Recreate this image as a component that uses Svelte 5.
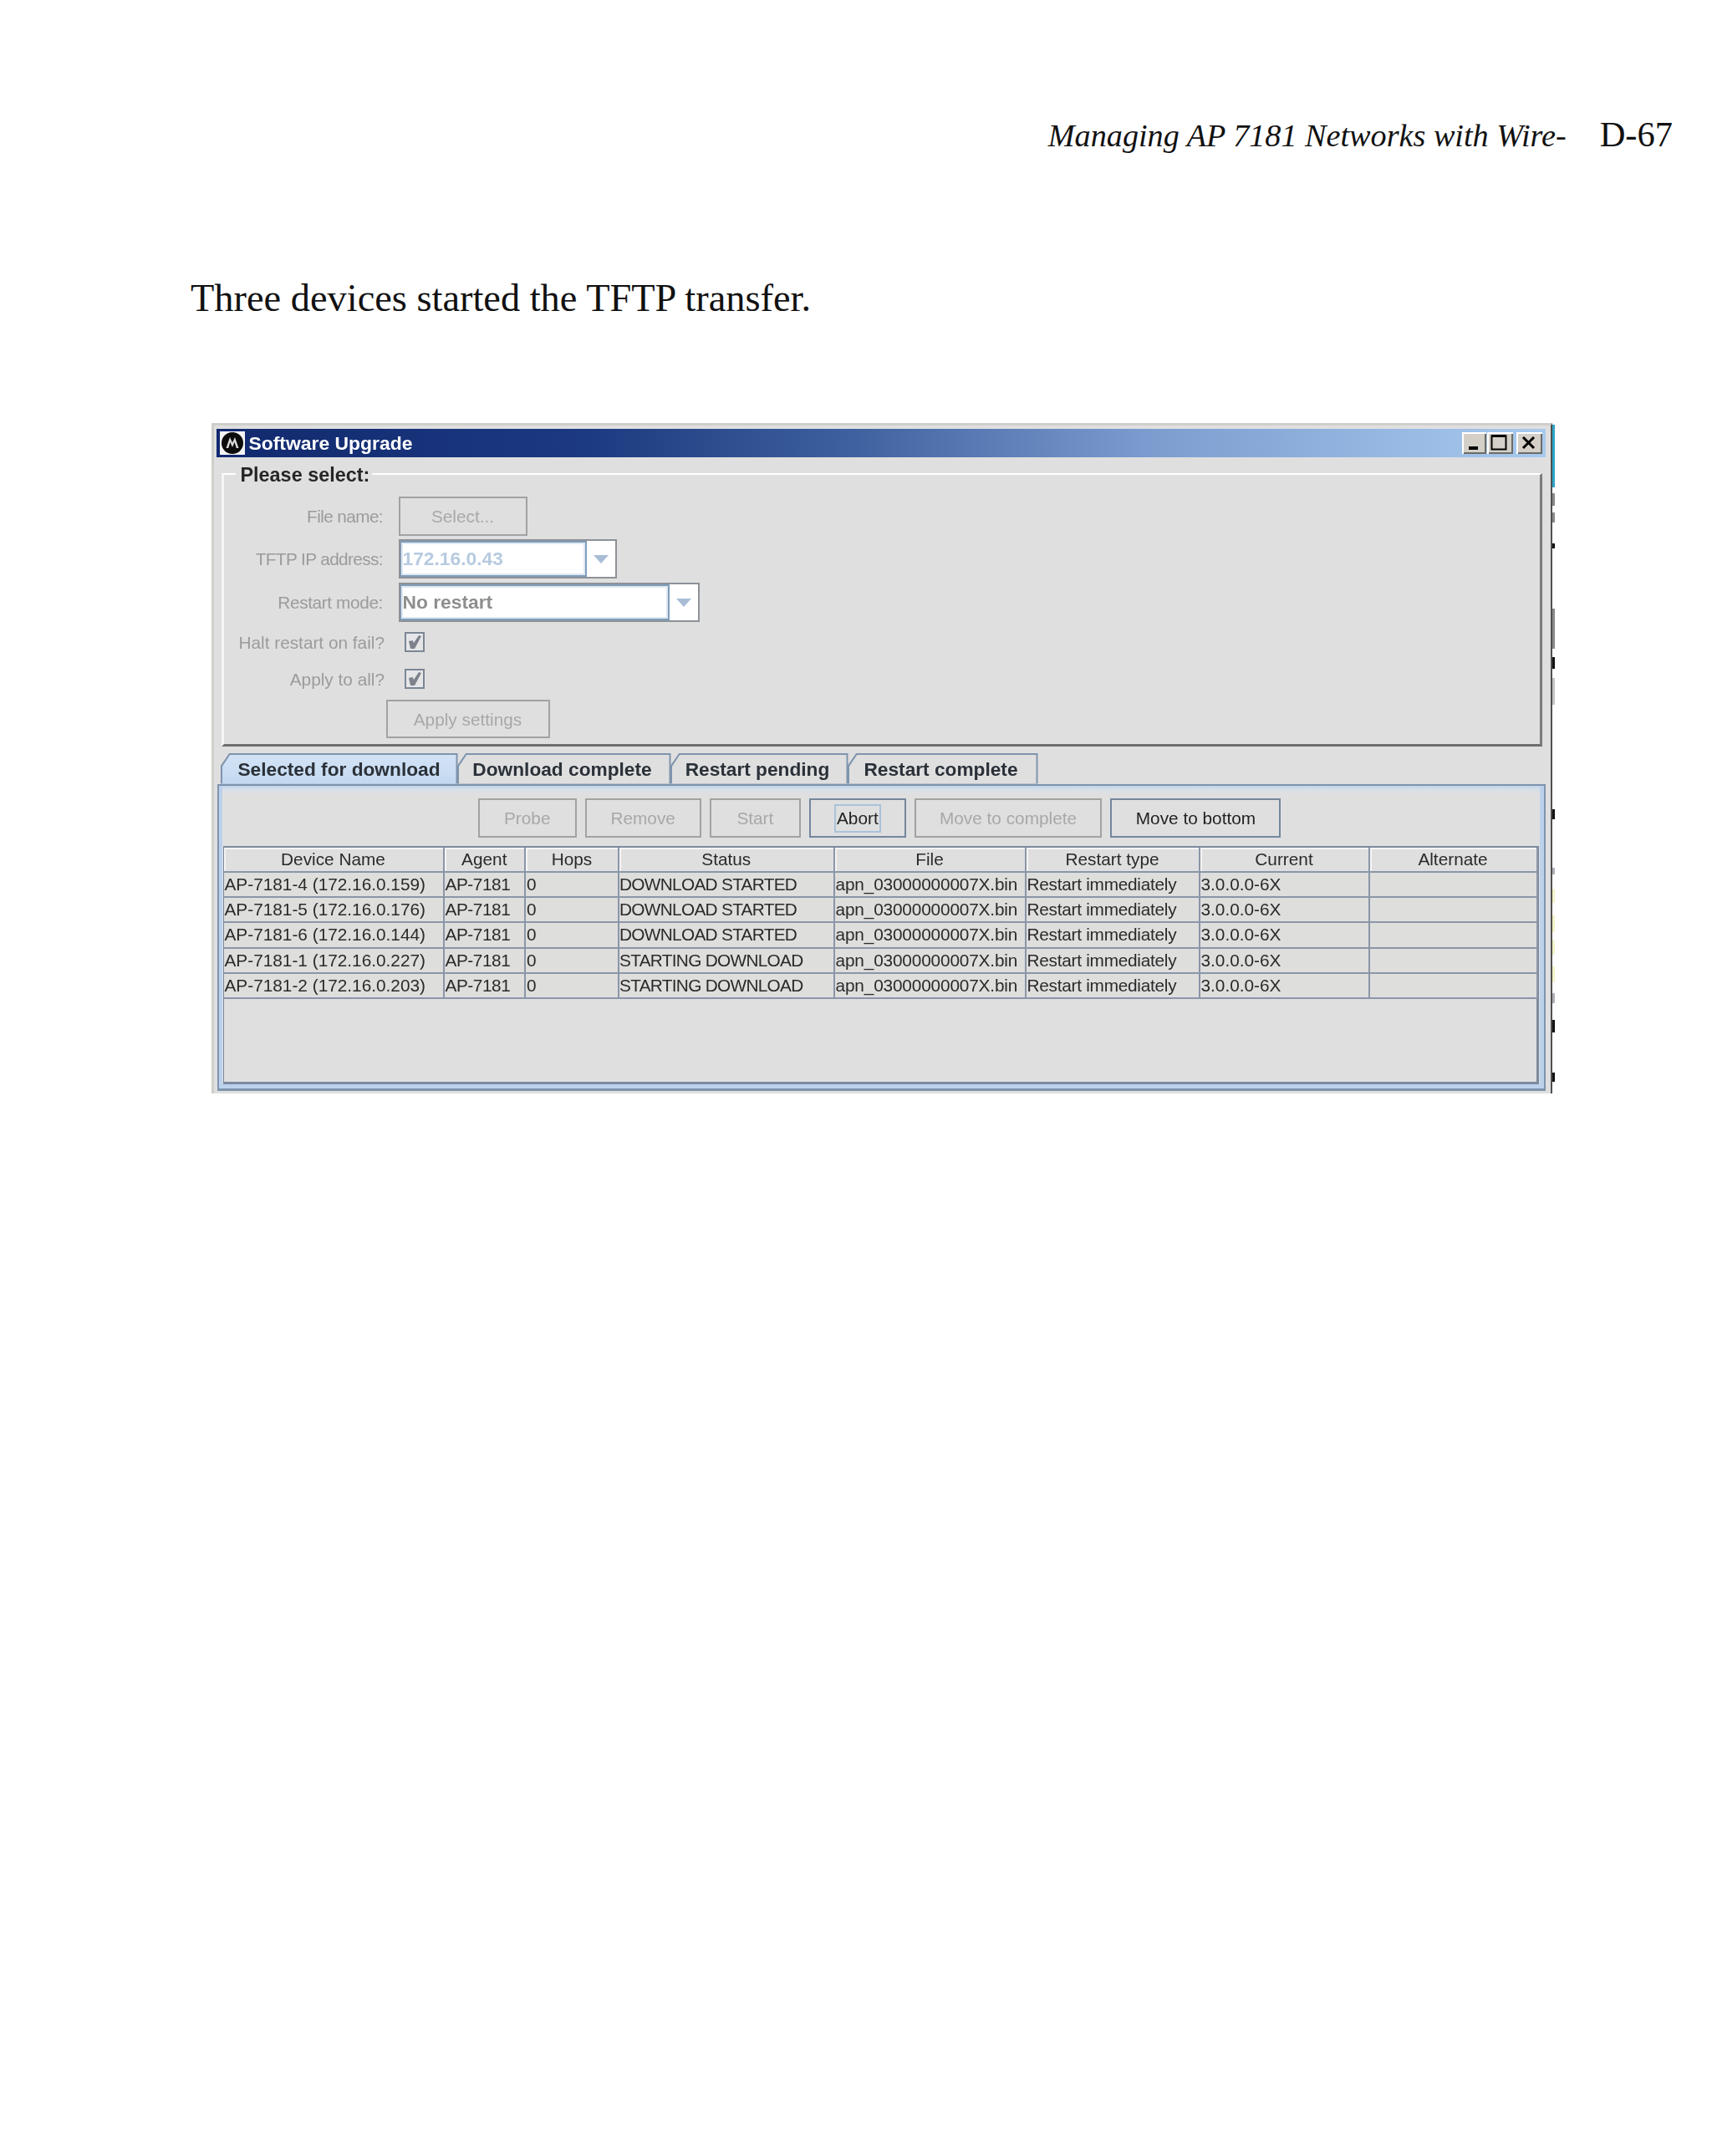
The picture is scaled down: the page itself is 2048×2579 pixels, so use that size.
<script>
  const columns = [
    { name: 'Device Name', width: 263 },
    { name: 'Agent', width: 97.5 },
    { name: 'Hops', width: 112 },
    { name: 'Status', width: 257.5 },
    { name: 'File', width: 229 },
    { name: 'Restart type', width: 208 },
    { name: 'Current', width: 203 },
    { name: 'Alternate', width: 201 }
  ];
  const file = 'apn_03000000007X.bin';
  const restart = 'Restart immediately';
  const version = '3.0.0.0-6X';
  const rows = [
    ['AP-7181-4 (172.16.0.159)', 'DOWNLOAD STARTED'],
    ['AP-7181-5 (172.16.0.176)', 'DOWNLOAD STARTED'],
    ['AP-7181-6 (172.16.0.144)', 'DOWNLOAD STARTED'],
    ['AP-7181-1 (172.16.0.227)', 'STARTING DOWNLOAD'],
    ['AP-7181-2 (172.16.0.203)', 'STARTING DOWNLOAD']
  ];
  const tabs = ['Selected for download', 'Download complete', 'Restart pending', 'Restart complete'];
  const tabWidths = [284, 256, 213, 228];
  const actions = [
    { label: 'Probe', width: 117.5, state: 'off' },
    { label: 'Remove', width: 139, state: 'off' },
    { label: 'Start', width: 109, state: 'off' },
    { label: 'Abort', width: 115.5, state: 'focus' },
    { label: 'Move to complete', width: 224.5, state: 'off' },
    { label: 'Move to bottom', width: 204, state: 'on' }
  ];
  const marks = [
    { top: -1, height: 75, color: '#2fa3c8' },
    { top: 81, height: 15, color: '#8a8a8a' },
    { top: 104, height: 12, color: '#8a8a8a' },
    { top: 141, height: 6, color: '#111' },
    { top: 219, height: 48, color: '#8a8a8a' },
    { top: 277, height: 14, color: '#111' },
    { top: 302, height: 32, color: '#c4c4c4' },
    { top: 459, height: 12, color: '#111' },
    { top: 529, height: 8, color: '#b0b0b8' },
    { top: 554, height: 17, color: '#f2f2c8' },
    { top: 586, height: 20, color: '#f2f2c8' },
    { top: 616, height: 17, color: '#f2f2c8' },
    { top: 647, height: 19, color: '#f2f2c8' },
    { top: 679, height: 12, color: '#b0b0b8' },
    { top: 711, height: 15, color: '#111' },
    { top: 774, height: 11, color: '#111' }
  ];
</script>

<div class="page">
  <header class="runhead">
    <em>Managing AP 7181 Networks with Wire-</em>
    <span>D-67</span>
  </header>

  <p class="intro">Three devices started the TFTP transfer.</p>

  <section class="window">
    <div class="edge">
      {#each marks as m}
        <i style="top:{m.top}px;height:{m.height}px;background:{m.color}"></i>
      {/each}
    </div>

    <div class="titlebar">
      <span class="logo">
        <svg viewBox="0 0 30 28" width="30" height="28" aria-hidden="true">
          <rect width="30" height="28" fill="#f4f4f4" />
          <circle cx="15" cy="14" r="13" fill="#0c0c0c" />
          <path d="M7.5 20 L12 7 L15 13.5 L18 7 L22.5 20 L19.8 20 L17.6 13 L15 19 L12.4 13 L10.2 20 Z" fill="#d8d8d8" />
        </svg>
      </span>
      <span class="title">Software Upgrade</span>
      <div class="winbtns">
        <button class="wb min" aria-label="Minimize"><svg viewBox="0 0 28 26" width="28" height="26"><rect x="8" y="17" width="11" height="4" fill="#000" /></svg></button>
        <button class="wb max" aria-label="Maximize"><svg viewBox="0 0 30 26" width="30" height="26"><rect x="5.5" y="4.5" width="17" height="16" fill="none" stroke="#000" stroke-width="2" /><rect x="5" y="3" width="18" height="3" fill="#000" /></svg></button>
        <button class="wb close" aria-label="Close"><svg viewBox="0 0 30 26" width="30" height="26"><path d="M8 6 L21 19 M21 6 L8 19" stroke="#000" stroke-width="3" /></svg></button>
      </div>
    </div>

    <div class="group">
      <span class="legend">Please select:</span>

      <div class="row r1">
        <span class="label tight">File name:</span>
        <span class="btn off select">Select...</span>
      </div>
      <div class="row r2">
        <span class="label tight">TFTP IP address:</span>
        <span class="combo c1">
          <span class="field ip">172.16.0.43</span>
          <span class="arrow"><svg viewBox="0 0 18 12" width="18" height="12"><path d="M0 1 H18 L9 11 Z" fill="#a9bdd6" /></svg></span>
        </span>
      </div>
      <div class="row r3">
        <span class="label mid">Restart mode:</span>
        <span class="combo c2">
          <span class="field mode">No restart</span>
          <span class="arrow"><svg viewBox="0 0 18 12" width="18" height="12"><path d="M0 1 H18 L9 11 Z" fill="#a9bdd6" /></svg></span>
        </span>
      </div>
      <div class="row r4">
        <span class="label wide">Halt restart on fail?</span>
        <span class="check"><svg viewBox="0 0 20 20" width="20" height="20"><path d="M3 9 L7.5 8 L9 11 L15 2 L18 3 L10 18 L5 18 Z" fill="#7d828c" /></svg></span>
      </div>
      <div class="row r5">
        <span class="label wide">Apply to all?</span>
        <span class="check"><svg viewBox="0 0 20 20" width="20" height="20"><path d="M3 9 L7.5 8 L9 11 L15 2 L18 3 L10 18 L5 18 Z" fill="#7d828c" /></svg></span>
      </div>
      <span class="btn off apply">Apply settings</span>
    </div>

    <div class="tabs">
      {#each tabs as tab, i}
        <div class="tab" class:selected={i === 0} style="width:{tabWidths[i]}px"><span>{tab}</span></div>
      {/each}
    </div>

    <div class="panel">
      <div class="actions">
        {#each actions as a}
          <span class="btn {a.state}" style="width:{a.width}px">
            {#if a.state === 'focus'}<b>{a.label}</b>{:else}{a.label}{/if}
          </span>
        {/each}
      </div>

      <div class="scroll">
        <table>
          <colgroup>
            {#each columns as c}<col style="width:{c.width}px" />{/each}
          </colgroup>
          <thead>
            <tr>{#each columns as c}<th>{c.name}</th>{/each}</tr>
          </thead>
          <tbody>
            {#each rows as r}
              <tr>
                <td>{r[0]}</td>
                <td>AP-7181</td>
                <td>0</td>
                <td>{r[1]}</td>
                <td>{file}</td>
                <td>{restart}</td>
                <td>{version}</td>
                <td></td>
              </tr>
            {/each}
          </tbody>
        </table>
      </div>
    </div>
  </section>
</div>

<style>
  :global(body) {
    margin: 0;
    background: #fff;
  }
  .page {
    width: 2048px;
    height: 2579px;
    overflow: hidden;
    background: #fff;
    font-family: "Liberation Serif", serif;
    color: #111;
  }
  .runhead {
    display: flex;
    justify-content: flex-end;
    align-items: baseline;
    gap: 40px;
    height: 48px;
    padding: 136.5px 47px 0 0;
    font-size: 42.5px;
    line-height: 48px;
  }
  .runhead em {
    font-size: 38.2px;
  }
  .intro {
    margin: 145px 0 0 228px;
    font-size: 46.4px;
    line-height: 54px;
  }
  .window {
    position: relative;
    box-sizing: border-box;
    width: 1604px;
    height: 801.5px;
    margin: 122.5px 0 0 252.5px;
    background: #dfdfe0;
    border-top: 3px solid #cfcfca;
    border-left: 3px solid #cfcfca;
    border-right: 2px solid #4f4f4f;
    font-family: "Liberation Sans", sans-serif;
    font-size: 20.8px;
    color: #2a2a2a;
    filter: blur(0.45px);
  }
  .edge {
    position: absolute;
    top: 0;
    right: -5px;
    width: 3px;
    height: 100%;
  }
  .edge i {
    position: absolute;
    left: 0;
    width: 3px;
  }
  .titlebar {
    display: flex;
    align-items: center;
    height: 34px;
    margin: 4px 6px 0 3px;
    padding-left: 4px;
    background: linear-gradient(90deg, #11296f 0%, #1c3a80 28%, #3f619f 48%, #7c9ccf 70%, #a8caee 100%);
    color: #fff;
    font-weight: bold;
    font-size: 22.9px;
  }
  .logo {
    display: flex;
    width: 30px;
    height: 28px;
  }
  .title {
    margin-left: 5px;
  }
  .winbtns {
    display: flex;
    margin-left: auto;
    margin-right: 4px;
  }
  .wb {
    box-sizing: border-box;
    height: 26px;
    padding: 0;
    display: flex;
    background: #d4d0c8;
    border: 0;
    box-shadow: inset 2px 2px 0 #fff, inset -2px -2px 0 #6c6c68;
  }
  .min { width: 29px; margin-right: 1px; }
  .max { width: 31px; margin-right: 4px; }
  .close { width: 31px; }

  .group {
    position: relative;
    box-sizing: border-box;
    height: 326.5px;
    margin: 19px 9.5px 0 9.5px;
    padding-top: 25px;
    border-top: 2px solid #fff;
    border-left: 3px solid #f6f6f6;
    border-right: 3px solid #7c7c7c;
    border-bottom: 3px solid #6e6e6e;
  }
  .legend {
    position: absolute;
    top: -13px;
    left: 13.5px;
    padding: 0 3px 0 6px;
    background: #dfdfe0;
    font-weight: bold;
    font-size: 23.4px;
    line-height: 26px;
    color: #262626;
  }
  .row {
    display: flex;
    align-items: center;
  }
  .r1 { height: 48px; }
  .r2 { height: 47px; margin-top: 4px; }
  .r3 { height: 47px; margin-top: 5px; }
  .r4 { height: 24px; margin-top: 12px; }
  .r5 { height: 24px; margin-top: 20px; }
  .label {
    box-sizing: border-box;
    width: 190px;
    margin-right: 18.5px;
    padding-top: 1.5px;
    text-align: right;
    color: #9b9b9b;
    white-space: nowrap;
  }
  .label.tight {
    letter-spacing: -0.62px;
  }
  .label.mid {
    letter-spacing: -0.38px;
  }
  .label.wide {
    width: 192px;
    margin-right: 24px;
  }
  .btn {
    box-sizing: border-box;
    display: flex;
    align-items: center;
    justify-content: center;
    height: 47px;
    padding-top: 2px;
    border: 2px solid #a2a2a2;
    white-space: nowrap;
  }
  .btn.off { color: #a8a8a8; }
  .btn.on,
  .btn.focus {
    color: #222;
    border-color: #74869c;
  }
  .btn b {
    font-weight: normal;
    padding: 3px 1px;
    border: 2px solid #a9c2dc;
  }
  .select { width: 154px; }
  .apply {
    width: 196px;
    height: 46px;
    margin: 13px 0 0 193.5px;
  }
  .combo {
    display: flex;
    height: 100%;
    box-sizing: border-box;
    background: #fff;
    border: 2px solid #8d9298;
  }
  .c1 { width: 261.5px; }
  .c2 { width: 360.5px; }
  .field {
    flex: 1;
    display: flex;
    align-items: center;
    padding-left: 2px;
    background: #fff;
    border: 2px solid #7f9db9;
    border-left: 1px solid #7f9db9;
    box-shadow: inset 0 0 0 2px #dfe9f3;
    font-weight: bold;
    font-size: 22.8px;
  }
  .ip { color: #b7cae0; }
  .mode { color: #8e8e8e; }
  .arrow {
    display: flex;
    align-items: center;
    justify-content: center;
    width: 34.5px;
    background: #fff;
  }
  .check {
    box-sizing: border-box;
    display: flex;
    align-items: center;
    justify-content: center;
    width: 24px;
    height: 24px;
    border: 2px solid #7c8796;
    background: #e6e6e8;
  }

  .tabs {
    position: relative;
    display: flex;
    height: 37px;
    margin: 8px 0 0 8px;
  }
  .tab {
    position: relative;
    box-sizing: border-box;
    display: flex;
    align-items: center;
    justify-content: center;
    margin-right: -1px;
    padding: 3px 4px 0 0;
    font-weight: bold;
    font-size: 22.7px;
    color: #2b3138;
    background: #7f94ac;
    clip-path: polygon(11px 0, 100% 0, 100% 100%, 0 100%, 0 16px);
  }
  .tab.selected {
    padding-right: 0;
  }
  .tab::before {
    content: "";
    position: absolute;
    inset: 2px 2px 0 2px;
    background: #dfdfe0;
    clip-path: polygon(10px 0, 100% 0, 100% 100%, 0 100%, 0 15px);
  }
  .tab.selected::before {
    bottom: -2px;
    background: linear-gradient(180deg, #d3e3f5 0%, #c2d8f0 100%);
  }
  .tab span {
    position: relative;
  }
  .panel {
    box-sizing: border-box;
    height: 367px;
    margin: 0 5.5px 0 4px;
    padding: 15px 4px 0 4px;
    background: linear-gradient(180deg, #bed4ec 0, #d8dfe8 4px, #dfdfe0 10px);
    border: 2px solid #7f94ac;
    border-width: 2px 2px 3px 2px;
    box-shadow: inset 4px 0 0 #bcd2ec, inset -5px 0 0 #bcd2ec, inset 0 -6px 0 #bcd2ec;
  }
  .actions {
    display: flex;
    gap: 10.2px;
    margin-left: 306.5px;
  }
  .scroll {
    box-sizing: border-box;
    height: 285px;
    width: 1574.5px;
    margin: 10px 0 0 1px;
    border: 2px solid #7c8a9e;
    border-width: 2px 3px 3px 1px;
  }
  table {
    table-layout: fixed;
    border-collapse: collapse;
    width: 1570.5px;
  }
  th {
    box-sizing: border-box;
    height: 29px;
    padding: 1px 0 0;
    font-weight: normal;
    text-align: center;
    border-right: 2px solid #8a96a8;
    border-bottom: 2px solid #8a96a8;
    box-shadow: inset 2px 2px 0 #f4f4f4;
  }
  td {
    height: 30.4px;
    padding: 0 0 0 1px;
    box-sizing: border-box;
    white-space: nowrap;
    overflow: hidden;
    border-right: 2px solid #8a96a8;
    border-bottom: 2px solid #8a96a8;
    background: #dededd;
  }
  td:nth-child(2) { letter-spacing: -0.45px; }
  td:nth-child(4) { letter-spacing: -0.7px; padding-left: 0; }
  td:nth-child(5) { letter-spacing: -0.16px; }
  td:nth-child(6) { letter-spacing: -0.26px; }
</style>
